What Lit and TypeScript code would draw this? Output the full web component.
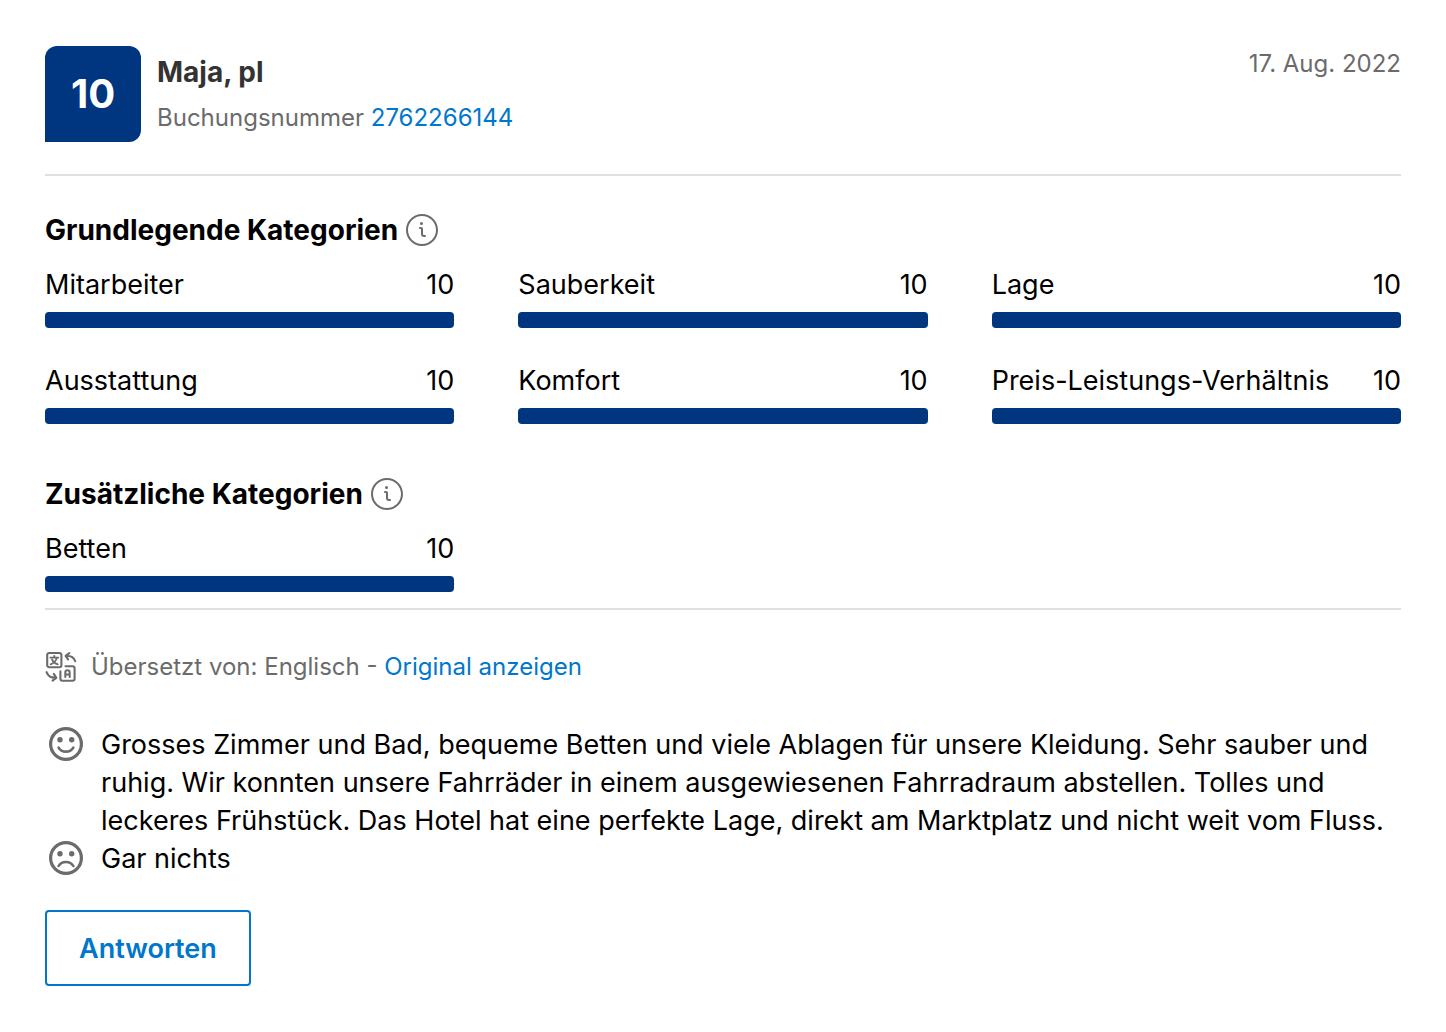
import { LitElement, html, css, svg } from "lit";
import { customElement, property } from "lit/decorators.js";

interface Score {
  label: string;
  value: number;
}

const basicScores: Score[] = [
  { label: "Mitarbeiter", value: 10 },
  { label: "Sauberkeit", value: 10 },
  { label: "Lage", value: 10 },
  { label: "Ausstattung", value: 10 },
  { label: "Komfort", value: 10 },
  { label: "Preis-Leistungs-Verhältnis", value: 10 },
];

const extraScores: Score[] = [{ label: "Betten", value: 10 }];

const face = (mouth: unknown) => html`
  <svg class="face" viewBox="0 0 34 34" aria-hidden="true">
    <circle cx="17" cy="17" r="15.4" fill="none" stroke="currentColor" stroke-width="3.2" />
    <circle cx="11" cy="12.7" r="2.7" fill="currentColor" />
    <circle cx="22.7" cy="12.7" r="2.7" fill="currentColor" />
    ${mouth}
  </svg>
`;

const smile = face(
  svg`<path d="M9.6 20.600C12.400 26 21.400 26 24.300 20.600" fill="none" stroke="currentColor" stroke-width="2.600" stroke-linecap="round" />`
);
const frown = face(
  svg`<path d="M9.6 25C12.400 19.600 21.400 19.600 24.300 25" fill="none" stroke="currentColor" stroke-width="2.600" stroke-linecap="round" />`
);

const translateIcon = html`
  <svg class="translate" viewBox="0 0 32 32" aria-hidden="true" fill="none" stroke="currentColor"
    stroke-width="2.1" stroke-linecap="round" stroke-linejoin="round">
    <rect x="2.2" y="2" width="14.2" height="14.2" rx="2" />
    <path d="M5.4 6.6h7.8M9.3 4.8v1.8M11.8 6.9c-.7 2.9-3 5.3-6.200 6.400M7 8.600c1.100 2.300 3.200 4 5.800 4.700" stroke-width="1.800" />
    <path d="M15.400 20.400v7.300a2 2 0 0 0 2 2h10.200a2 2 0 0 0 2-2V17.200a2 2 0 0 0-2-2h-7.100" />
    <path d="M20.300 26v-4.600a2.200 2.200 0 0 1 4.400 0V26M20.300 23.400h4.400" stroke-width="2" />
    <path d="M24.300 2.200l-3.700 2.600 2.500 3.600M20.800 4.800c4.900-.3 8.200 1.700 9.400 5.400" />
    <path d="M7.600 29.600l3.700-2.700-2.500-4M11 26.800c-4.900.3-8.100-1.700-9.400-5.600" />
  </svg>
`;

@customElement("score-meter")
export class ScoreMeter extends LitElement {
  @property() label = "";
  @property({ type: Number }) value = 0;

  static styles = css`
    :host {
      display: block;
    }
    .line {
      display: flex;
      justify-content: space-between;
      gap: 8px;
      line-height: 42px;
      white-space: nowrap;
    }
    .track {
      height: 16px;
      margin-top: 6px;
      border-radius: 4px;
      background: #e7e7e7;
      overflow: hidden;
    }
    .fill {
      height: 100%;
      background: #003580;
    }
  `;

  render() {
    return html`
      <div class="line"><span>${this.label}</span><span>${this.value}</span></div>
      <div class="track"><div class="fill" style="width: ${this.value * 10}%"></div></div>
    `;
  }
}

@customElement("score-section")
export class ScoreSection extends LitElement {
  @property() heading = "";
  @property({ attribute: false }) scores: Score[] = [];

  static styles = css`
    :host {
      display: block;
    }
    .heading {
      display: flex;
      align-items: center;
      gap: 8px;
      margin: 0 0 14px;
      font-size: 28px;
      font-weight: 700;
      line-height: 40px;
    }
    .info {
      display: flex;
      padding: 0;
      border: 0;
      background: none;
      color: #6b6b6b;
      cursor: pointer;
    }
    .info svg {
      width: 32px;
      height: 32px;
      fill: currentColor;
    }
    .grid {
      display: grid;
      grid-template-columns: repeat(3, minmax(0, 1fr));
      gap: 32px 64px;
    }
  `;

  render() {
    return html`
      <h2 class="heading">
        ${this.heading}
        <button class="info" type="button" aria-label="Info">
          <svg viewBox="0 0 24 24" aria-hidden="true">
            <path
              d="M14.25 15.75h-.75a.75.75 0 0 1-.75-.75v-3.75a1.5 1.5 0 0 0-1.5-1.5h-.75a.75.75 0 0 0 0 1.5h.75V15a2.25 2.25 0 0 0 2.25 2.25h.75a.75.75 0 0 0 0-1.5zM11.625 6a1.125 1.125 0 1 0 0 2.25 1.125 1.125 0 0 0 0-2.25zM22.5 12c0 5.799-4.701 10.5-10.5 10.5S1.5 17.799 1.5 12 6.201 1.5 12 1.5 22.5 6.201 22.5 12zm1.5 0c0-6.627-5.373-12-12-12S0 5.373 0 12s5.373 12 12 12 12-5.373 12-12z"
            />
          </svg>
        </button>
      </h2>
      <div class="grid">
        ${this.scores.map((s) => html`<score-meter .label=${s.label} .value=${s.value}></score-meter>`)}
      </div>
    `;
  }
}

@customElement("app-root")
export class AppRoot extends LitElement {
  static styles = css`
    :host {
      display: block;
      box-sizing: border-box;
      padding: 46px 45px;
      background: #fff;
      color: #000;
      font-family: Inter, "Liberation Sans", sans-serif;
      font-size: 27px;
      line-height: 38px;
    }
    a {
      color: #0077cc;
      text-decoration: none;
    }
    .header {
      display: flex;
      gap: 16px;
      padding-bottom: 32px;
      border-bottom: 2px solid #e0e0e0;
    }
    .badge {
      display: flex;
      align-items: center;
      justify-content: center;
      width: 96px;
      height: 96px;
      border-radius: 12px 12px 12px 0;
      background: #003580;
      color: #fff;
      font-size: 40px;
      font-weight: 700;
    }
    .guest {
      flex: 1;
      padding-top: 6px;
    }
    .name {
      margin: 0;
      color: #333;
      font-size: 28px;
      font-weight: 700;
      line-height: 40px;
    }
    .small {
      color: #6b6b6b;
      font-size: 24px;
      line-height: 36px;
    }
    .booking {
      margin: 8px 0 0;
    }
    .basic {
      margin-top: 34px;
    }
    .extra {
      margin-top: 50px;
      padding-bottom: 16px;
      border-bottom: 2px solid #e0e0e0;
    }
    .translated {
      display: flex;
      align-items: center;
      gap: 14px;
      margin: 39px 0 41px;
    }
    .translate {
      width: 32px;
      height: 32px;
    }
    .comment {
      display: flex;
      gap: 18px;
    }
    .comment p {
      flex: 1;
      margin: 0;
    }
    .face {
      width: 34px;
      height: 34px;
      margin: 1px 0 0 4px;
      color: #6b6b6b;
    }
    .reply {
      margin-top: 32px;
      padding: 17px 32px 15px;
      border: 2px solid #0077cc;
      border-radius: 4px;
      background: #fff;
      color: #0077cc;
      font: inherit;
      font-weight: 600;
      line-height: 40px;
      cursor: pointer;
    }
  `;

  render() {
    return html`
      <article>
        <header class="header">
          <div class="badge">10</div>
          <div class="guest">
            <h1 class="name">Maja, pl</h1>
            <p class="small booking">Buchungsnummer <a href="#booking">2762266144</a></p>
          </div>
          <time class="small" datetime="2022-08-17">17. Aug. 2022</time>
        </header>
        <score-section class="basic" .heading=${"Grundlegende Kategorien"} .scores=${basicScores}></score-section>
        <score-section class="extra" .heading=${"Zusätzliche Kategorien"} .scores=${extraScores}></score-section>
        <div class="small translated">
          ${translateIcon}
          <span>Übersetzt von: Englisch - <a href="#original">Original anzeigen</a></span>
        </div>
        <div class="comment">
          ${smile}
          <p>
            Grosses Zimmer und Bad, bequeme Betten und viele Ablagen für unsere Kleidung. Sehr sauber und
            ruhig. Wir konnten unsere Fahrräder in einem ausgewiesenen Fahrradraum abstellen. Tolles und
            leckeres Frühstück. Das Hotel hat eine perfekte Lage, direkt am Marktplatz und nicht weit vom Fluss.
          </p>
        </div>
        <div class="comment">
          ${frown}
          <p>Gar nichts</p>
        </div>
        <button class="reply" type="button">Antworten</button>
      </article>
    `;
  }
}
